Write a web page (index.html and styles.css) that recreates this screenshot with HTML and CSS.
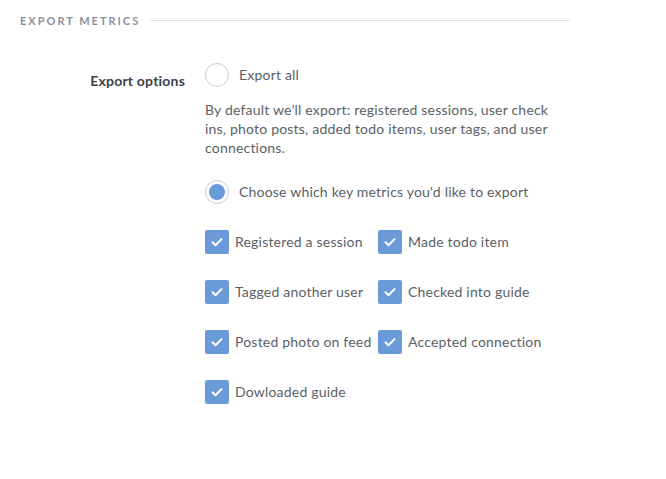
FILE: index.html
```html
<!DOCTYPE html>
<html>
<head>
<meta charset="utf-8">
<link rel="stylesheet" href="styles.css">
</head>
<body>
<section class="panel">
  <div class="section-head">
    <h2 class="section-title">Export Metrics</h2>
    <div class="section-rule"></div>
  </div>
  <div class="form-row">
    <div class="form-label">Export options</div>
    <div class="form-body">
      <label class="radio">
        <span class="radio-circle"></span>
        <span class="radio-text">Export all</span>
      </label>
      <p class="desc">By default we’ll export: registered sessions, user check ins, photo posts, added todo items, user tags, and user connections.</p>
      <label class="radio radio-second">
        <span class="radio-circle checked"><span class="radio-dot"></span></span>
        <span class="radio-text">Choose which key metrics you'd like to export</span>
      </label>
      <div class="checks">
        <label class="check"><span class="box"><svg viewBox="0 0 24 24" width="24" height="24"><path d="M7.5 12.3l3 3 6-6.2" fill="none" stroke="#fff" stroke-width="2" stroke-linecap="round" stroke-linejoin="round"/></svg></span><span class="check-text">Registered a session</span></label>
        <label class="check"><span class="box"><svg viewBox="0 0 24 24" width="24" height="24"><path d="M7.5 12.3l3 3 6-6.2" fill="none" stroke="#fff" stroke-width="2" stroke-linecap="round" stroke-linejoin="round"/></svg></span><span class="check-text">Made todo item</span></label>
        <label class="check"><span class="box"><svg viewBox="0 0 24 24" width="24" height="24"><path d="M7.5 12.3l3 3 6-6.2" fill="none" stroke="#fff" stroke-width="2" stroke-linecap="round" stroke-linejoin="round"/></svg></span><span class="check-text">Tagged another user</span></label>
        <label class="check"><span class="box"><svg viewBox="0 0 24 24" width="24" height="24"><path d="M7.5 12.3l3 3 6-6.2" fill="none" stroke="#fff" stroke-width="2" stroke-linecap="round" stroke-linejoin="round"/></svg></span><span class="check-text">Checked into guide</span></label>
        <label class="check"><span class="box"><svg viewBox="0 0 24 24" width="24" height="24"><path d="M7.5 12.3l3 3 6-6.2" fill="none" stroke="#fff" stroke-width="2" stroke-linecap="round" stroke-linejoin="round"/></svg></span><span class="check-text">Posted photo on feed</span></label>
        <label class="check"><span class="box"><svg viewBox="0 0 24 24" width="24" height="24"><path d="M7.5 12.3l3 3 6-6.2" fill="none" stroke="#fff" stroke-width="2" stroke-linecap="round" stroke-linejoin="round"/></svg></span><span class="check-text">Accepted connection</span></label>
        <label class="check"><span class="box"><svg viewBox="0 0 24 24" width="24" height="24"><path d="M7.5 12.3l3 3 6-6.2" fill="none" stroke="#fff" stroke-width="2" stroke-linecap="round" stroke-linejoin="round"/></svg></span><span class="check-text">Dowloaded guide</span></label>
      </div>
    </div>
  </div>
</section>
</body>
</html>
```
FILE: styles.css
```css
html, body {
  margin: 0;
  padding: 0;
  background: #ffffff;
}
body {
  font-family: Lato, "Open Sans", "Liberation Sans", sans-serif;
  color: #5a5f66;
  font-size: 14px;
  letter-spacing: 0.2px;
}
.panel {
  width: 550px;
  padding: 12px 0 0 20px;
}
.section-head {
  display: flex;
  align-items: center;
  gap: 10px;
  height: 16px;
}
.section-title {
  margin: 0;
  font-size: 11px;
  font-weight: 700;
  letter-spacing: 2px;
  text-transform: uppercase;
  color: #8c9199;
  white-space: nowrap;
}
.section-rule {
  flex: 1;
  height: 1px;
  background: #dde0e4;
}
.form-row {
  display: flex;
  gap: 20px;
  margin-top: 35px;
}
.form-label {
  width: 165px;
  text-align: right;
  font-weight: 700;
  font-size: 14px;
  color: #3d4148;
  padding-top: 9px;
}
.form-body {
  flex: 1;
}
.radio {
  display: flex;
  align-items: center;
  gap: 10px;
  height: 24px;
}
.radio-circle {
  width: 22px;
  height: 22px;
  border: 1px solid #c8ccd3;
  border-radius: 50%;
  display: flex;
  align-items: center;
  justify-content: center;
  flex: none;
}
.radio-dot {
  width: 16px;
  height: 16px;
  border-radius: 50%;
  background: #6a9bd8;
}
.radio-text {
  color: #5a5f66;
  margin-top: -2px;
}
.desc {
  margin: 13px 0 0;
  line-height: 19px;
  width: 358px;
}
.radio-second {
  margin-top: 23px;
}
.checks {
  display: grid;
  grid-template-columns: 173px auto;
  row-gap: 26px;
  margin-top: 26px;
}
.check {
  display: flex;
  align-items: center;
  gap: 6px;
  height: 24px;
  white-space: nowrap;
}
.box {
  width: 24px;
  height: 24px;
  border-radius: 2px;
  background: #6a9bd8;
  flex: none;
  display: block;
}
.box svg {
  display: block;
}
.check-text {
  color: #5a5f66;
  margin-top: -2px;
}
```
